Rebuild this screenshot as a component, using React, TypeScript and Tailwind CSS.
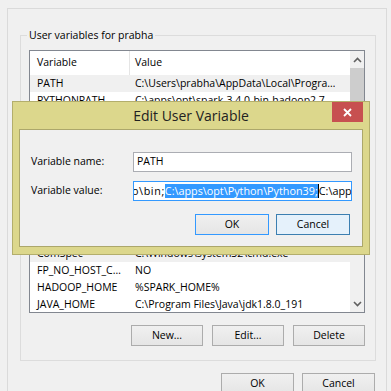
import clsx from 'clsx';

interface Row {
  name: string;
  value: string;
  highlight?: boolean;
}

const rows: Row[] = [
  { name: 'PATH', value: 'C:\\Users\\prabha\\AppData\\Local\\Progra…', highlight: true },
  { name: 'PYTHONPATH', value: 'C:\\apps\\opt\\spark-3.4.0-bin-hadoop2.7' },
  { name: 'PYSPARK_PYTHON', value: 'python' },
  { name: 'SPARK_HOME', value: 'C:\\apps\\opt\\spark-3.4.0-bin-hadoop2.7' },
  { name: 'TEMP', value: '%USERPROFILE%\\AppData\\Local\\Temp' },
  { name: 'TMP', value: '%USERPROFILE%\\AppData\\Local\\Temp' },
  { name: 'OneDrive', value: 'C:\\Users\\prabha\\OneDrive' },
  { name: 'APPDATA', value: 'C:\\Users\\prabha\\AppData\\Roaming' },
  { name: 'USERDOMAIN', value: 'PRABHA-PC' },
  { name: 'USERNAME', value: 'prabha' },
  { name: 'ComSpec', value: 'C:\\Windows\\system32\\cmd.exe', highlight: true },
  { name: 'FP_NO_HOST_C…', value: 'NO' },
  { name: 'HADOOP_HOME', value: '%SPARK_HOME%' },
  { name: 'JAVA_HOME', value: 'C:\\Program Files\\Java\\jdk1.8.0_191' },
];

function WinButton({ label, className }: { label: string; className?: string }) {
  return (
    <div
      className={clsx(
        'flex items-center justify-center border bg-linear-to-b from-[#f0f0f0] to-[#e5e5e5]',
        className ?? 'border-[#acacac]'
      )}
    >
      {label}
    </div>
  );
}

function Chevron({ down }: { down?: boolean }) {
  return (
    <svg width="9" height="6" viewBox="0 0 9 6" className={down ? 'rotate-180' : ''}>
      <path d="M1 5 L4.5 1.5 L8 5" fill="none" stroke="#606060" strokeWidth="1.6" />
    </svg>
  );
}

function VariableList() {
  return (
    <div className="flex w-[336px] h-[263px] border border-[#828790] bg-white overflow-hidden">
      <div className="flex-1 min-w-0">
        {/* column headers */}
        <div className="flex h-[24px]">
          <div className="w-[100px] border-r border-[#e5e5e5] pl-[7px] flex items-center">Variable</div>
          <div className="pl-[5px] flex items-center">Value</div>
        </div>
        {rows.map((row) => (
          <div
            key={row.name}
            className={clsx('flex h-[17px] items-center', row.highlight && 'bg-[#f0f0f0]')}
          >
            <div className="w-[100px] pl-[7px] whitespace-nowrap overflow-hidden">{row.name}</div>
            <div className="pl-[5px] whitespace-nowrap overflow-hidden">{row.value}</div>
          </div>
        ))}
      </div>
      {/* scrollbar */}
      <div className="w-[14px] flex flex-col bg-[#f0f0f0]">
        <div className="h-[17px] flex items-center justify-center">
          <Chevron />
        </div>
        <div className="h-[84px] bg-[#cdcdcd]" />
        <div className="flex-1" />
        <div className="h-[17px] flex items-center justify-center">
          <Chevron down />
        </div>
      </div>
    </div>
  );
}

function EditDialog() {
  return (
    <div className="absolute left-[12px] top-[101px] w-[358px] h-[154px] border border-[#b3ae6c] bg-[#dcd78c] flex flex-col">
      <div className="relative h-[27px] flex items-center justify-center text-[14px] text-[#222]">
        Edit User Variable
        <div className="absolute right-[6px] top-0 w-[31px] h-[20px] bg-[#c75050] flex items-center justify-center">
          <svg width="9" height="9" viewBox="0 0 9 9">
            <path d="M1 1 L8 8 M8 1 L1 8" stroke="#fff" strokeWidth="1.8" />
          </svg>
        </div>
      </div>
      <div className="mx-[6px] h-[118px] border border-[#aca76b] bg-[#f0f0f0] pl-[11px] pt-[22px]">
        <div className="flex items-center h-[20px]">
          <div className="w-[102px]">Variable name:</div>
          <div className="w-[219px] h-[20px] border border-[#abadb3] bg-white pl-[3px] flex items-center">
            PATH
          </div>
        </div>
        <div className="flex items-center h-[20px] mt-[9px]">
          <div className="w-[102px]">Variable value:</div>
          <div className="w-[219px] h-[20px] border border-[#3399ff] bg-white overflow-hidden flex items-center text-[10.8px]">
            <div className="flex items-center whitespace-nowrap -ml-[2px]">
              <span className="tracking-[0.6px]">o\bin;</span>
              <span className="bg-[#3399ff] text-white leading-[14px]">C:\apps\opt\Python\Python39;</span>
              <span className="w-[1px] h-[14px] bg-black" />
              <span>C:\apps\opt\hadoop\bin</span>
            </div>
          </div>
        </div>
        <div className="flex gap-[7px] ml-[164px] mt-[13px]">
          <WinButton label="OK" className="w-[74px] h-[21px] border-[#3399ff]" />
          <div className="w-[74px] h-[21px] border border-[#3c7fb1] bg-[#e5f1fb] flex items-center justify-center">
            Cancel
          </div>
        </div>
      </div>
    </div>
  );
}

export default function App() {
  return (
    <div className="relative w-[391px] h-[391px] overflow-hidden bg-[#f0f0f0] font-['Open_Sans',sans-serif] text-[10.5px] text-black">
      <div className="ml-[7px] mt-[8px] w-[380px] h-[383px] border-l border-r border-t border-[#dadada] pl-[12px] pt-[26px]">
        <div className="relative w-[356px] h-[326px] border border-[#dcdcdc] pl-[8px] pt-[14px]">
          <span className="absolute left-[6px] -top-[9px] bg-[#f0f0f0] px-[2px] leading-[16px]">
            User variables for prabha
          </span>
          <VariableList />
          <div className="mt-[12px] w-[336px] flex justify-end gap-[9px]">
            <WinButton label="New..." className="w-[72px] h-[21px] border-[#acacac]" />
            <WinButton label="Edit..." className="w-[72px] h-[21px] border-[#acacac]" />
            <WinButton label="Delete" className="w-[72px] h-[21px] border-[#acacac]" />
          </div>
        </div>
        <div className="mt-[12px] w-[355px] flex justify-end gap-[8px]">
          <WinButton label="OK" className="w-[73px] h-[22px] border-[#acacac]" />
          <WinButton label="Cancel" className="w-[73px] h-[22px] border-[#acacac]" />
        </div>
      </div>
      <EditDialog />
    </div>
  );
}
